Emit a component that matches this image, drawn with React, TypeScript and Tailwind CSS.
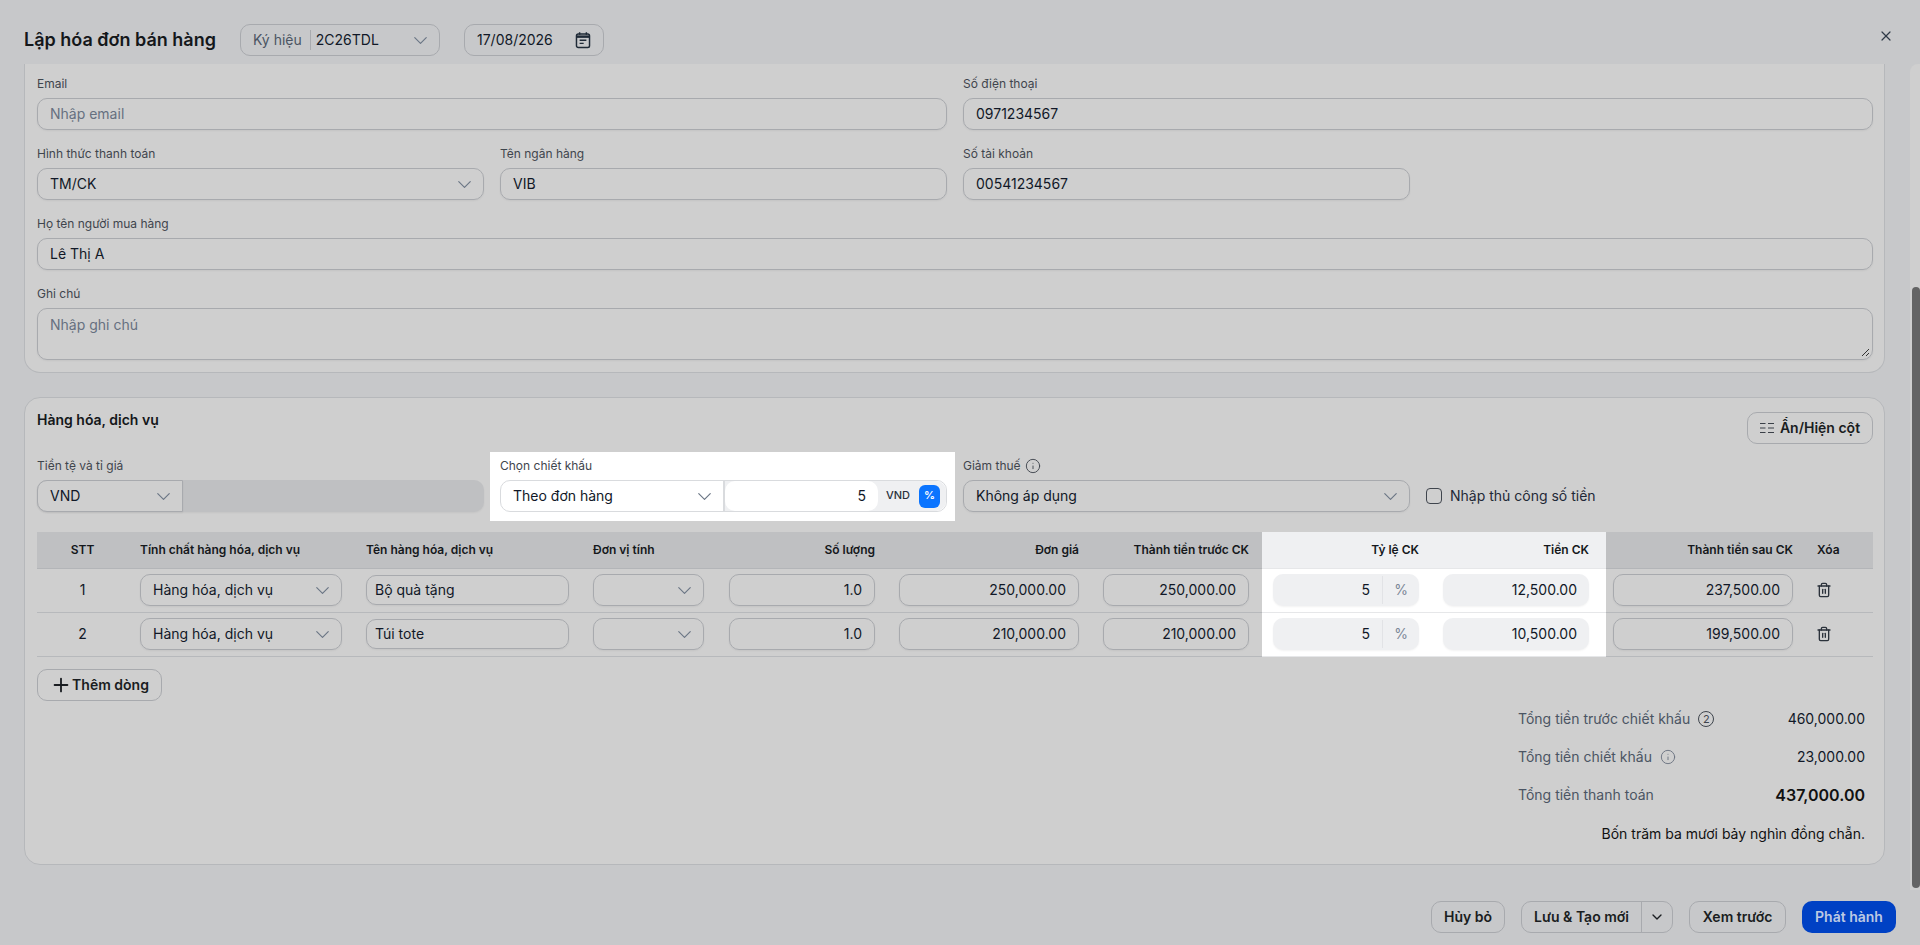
import { ChevronDown, Info, Plus, Trash2, X } from "lucide-react";

const Chev = () => (
  <ChevronDown size={23} strokeWidth={1.2} className="shrink-0 text-[#6b7685]" />
);

const box = "h-8 rounded-[10px] border border-[#a8aaae] shadow-xs flex items-center text-sm";
const ink = " text-[#111827]";
const lab = "h-4 mb-1.5 flex items-center text-xs leading-4 text-[#3f454d]";

const Field = ({ label, children, className = "" }: { label: string; children: React.ReactNode; className?: string }) => (
  <div className={className}>
    <div className={lab}>{label}</div>
    {children}
  </div>
);

const Text = ({ v, ph = false }: { v: string; ph?: boolean }) => (
  <div className={box + " px-3" + (ph ? " text-[#667080]" : ink)}>{v}</div>
);

const Sel = ({ v, className = "" }: { v: string; className?: string }) => (
  <div className={box + ink + " justify-between pl-3 pr-[7px] " + className}>
    <span>{v}</span>
    <Chev />
  </div>
);

const Num = ({ v }: { v: string }) => (
  <div className={box + ink + " justify-end px-3"}>{v}</div>
);

const Btn = ({ children, className = "" }: { children: React.ReactNode; className?: string }) => (
  <div className={"h-8 rounded-[10px] border border-[#a8aaae] flex items-center justify-center text-sm font-semibold text-[#1a1d21] " + className}>
    {children}
  </div>
);

const CalendarIcon = () => (
  <svg width="18" height="18" viewBox="0 0 16 16" fill="none" stroke="#1f2a37" strokeWidth="1.3" className="shrink-0">
    <rect x="2.2" y="2.6" width="11.6" height="12" rx="1.6" />
    <path d="M2.2 5h11.6" strokeWidth="2.2" />
    <path d="M5 1v2.4M11 1v2.4" />
    <path d="M5 8.2h6M5 11h3.6" />
  </svg>
);

const ColumnsIcon = () => (
  <svg width="14" height="12" viewBox="0 0 14 12" fill="none" stroke="#3a4048" strokeWidth="1.1" className="shrink-0">
    <path d="M0 1.5h5.5M0 6h5.5M0 10.5h5.5M8 1.5h6M8 6h6M8 10.5h6" />
  </svg>
);

const gridCols = "grid grid-cols-[91px_226px_227px_135px_171px_204px_171px_169px_175px_199px_68px]";
const cell = "h-11 pb-px flex items-center border-b border-[#b7b9bc]";
const hcell = "h-[37px] flex items-center justify-end border-b border-[#b3b5b8] text-xs font-semibold text-[#15181c] bg-[#bfc0c2]";
const white = "h-11 pb-px flex items-center border-b border-[#e6e7e9] bg-white";

const Row = ({ n, name, price, pct, ck, after }: { n: string; name: string; price: string; pct: string; ck: string; after: string }) => (
  <div className={gridCols}>
    <div className={cell + " justify-center text-sm text-[#111827]"}>{n}</div>
    <div className={cell + " px-3"}><Sel v="Hàng hóa, dịch vụ" className="w-full" /></div>
    <div className={cell + " px-3"}>
      <div className={box + ink + " w-full !h-[30px] px-2"}>{name}</div>
    </div>
    <div className={cell + " px-3"}><Sel v="" className="w-full" /></div>
    <div className={cell + " pl-[13px] pr-3"}><div className="w-full"><Num v="1.0" /></div></div>
    <div className={cell + " px-3"}><div className="w-full"><Num v={price} /></div></div>
    <div className={cell + " pl-3 pr-[13px]"}><div className="w-full"><Num v={price} /></div></div>
    <div className={white + " pl-[11px] pr-3"}>
      <div className="w-full h-8 rounded-[10px] bg-[#eff0f2] shadow-xs flex items-center text-sm text-[#111827]">
        <div className="flex-1 text-right pr-3">{pct}</div>
        <div className="w-[37px] h-7 border-l border-[#e2e3e6] flex items-center justify-center text-[#7b8797]">%</div>
      </div>
    </div>
    <div className={white + " pl-3 pr-[17px]"}>
      <div className="w-full h-8 rounded-[10px] bg-[#eff0f2] shadow-xs flex items-center justify-end px-3 text-sm text-[#111827]">{ck}</div>
    </div>
    <div className={cell + " pl-[7px] pr-3"}><div className="w-full"><Num v={after} /></div></div>
    <div className={cell + " pl-[11px]"}><Trash2 size={16} strokeWidth={2} className="text-[#2b323b]" /></div>
  </div>
);

const Total = ({ label, value, icon, valueClass = "text-sm text-[#111827]" }: { label: string; value: string; icon?: React.ReactNode; valueClass?: string }) => (
  <div className="h-[38px] flex items-center justify-between">
    <div className="flex items-center gap-2 text-sm text-[#4b5563]">
      <span>{label}</span>
      {icon}
    </div>
    <div className={valueClass}>{value}</div>
  </div>
);

export default function App() {
  return (
    <div className="h-[945px] overflow-hidden flex flex-col bg-[#c7c8ca] font-['Inter',sans-serif]">
      <header className="h-16 shrink-0 flex items-center justify-between pl-6 pr-[26px] pt-4">
        <div className="flex items-center">
          <h1 className="text-lg font-semibold text-[#14171a] w-[216px]">Lập hóa đơn bán hàng</h1>
          <div className="w-[200px] h-8 rounded-[10px] border border-[#a8aaae] flex items-center pl-3 pr-[7px] text-sm">
            <span className="text-[#4b5563] pr-2 border-r border-[#a8aaae] leading-5">Ký hiệu</span>
            <span className="pl-[5px] flex-1 text-[#111827]">2C26TDL</span>
            <Chev />
          </div>
          <div className="ml-6 w-[140px] h-8 rounded-[10px] border border-[#a8aaae] flex items-center justify-between pl-3 pr-[11px] text-sm text-[#111827]">
            <span>17/08/2026</span>
            <CalendarIcon />
          </div>
        </div>
        <X size={16} strokeWidth={1.8} className="text-[#2f3a48] -mt-2" />
      </header>

      <div className="flex-1 min-h-0 flex">
        <main className="flex-1 min-w-0 pl-6 pr-[25px]">
          <section className="h-[309px] bg-[#cfcfcf] border border-t-0 border-[#b6b8bb] rounded-b-2xl pt-3 pl-3 pr-[11px] flex flex-col gap-4">
            <div className="grid grid-cols-2 gap-x-4">
              <Field label="Email"><Text v="Nhập email" ph /></Field>
              <Field label="Số điện thoại"><Text v="0971234567" /></Field>
            </div>
            <div className="grid grid-cols-4 gap-x-4">
              <Field label="Hình thức thanh toán"><Sel v="TM/CK" /></Field>
              <Field label="Tên ngân hàng"><Text v="VIB" /></Field>
              <Field label="Số tài khoản"><Text v="00541234567" /></Field>
            </div>
            <Field label="Họ tên người mua hàng"><Text v="Lê Thị A" /></Field>
            <Field label="Ghi chú">
              <div className="relative h-[52px] rounded-[10px] border border-[#a8aaae] shadow-xs px-3 py-1.5 text-sm text-[#667080]">
                Nhập ghi chú
                <svg width="9" height="9" viewBox="0 0 9 9" stroke="#333" strokeWidth="1" className="absolute right-0.5 bottom-0.5">
                  <path d="M1 8l7-7M5 8l3-3" />
                </svg>
              </div>
            </Field>
          </section>

          <section className="mt-6 h-[468px] bg-[#cfcfcf] border border-[#b6b8bb] rounded-2xl pt-3 pl-3 pr-[11px]">
            <div className="flex justify-between items-start">
              <h2 className="text-sm leading-5 font-semibold text-[#14171a]">Hàng hóa, dịch vụ</h2>
              <Btn className="mt-0.5 w-[126px] gap-1.5"><ColumnsIcon />Ẩn/Hiện cột</Btn>
            </div>

            <div className="mt-2 grid grid-cols-4 gap-x-4">
              <div className="pt-1.5">
                <div className={lab}>Tiền tệ và tỉ giá</div>
                <div className="flex h-8 rounded-[10px] bg-[#bfc0c2] shadow-xs">
                  <Sel v="VND" className="w-[146px] rounded-r-none bg-[#cfcfcf]" />
                </div>
              </div>
              <div className="bg-white -ml-2.5 -mr-2 pl-2.5 pr-2 pt-1.5 pb-[9px]">
                <div className={lab}>Chọn chiết khấu</div>
                <div className="h-8 rounded-[10px] border border-[#d9dbde] flex items-center text-sm text-[#111827]">
                  <div className="w-[224px] h-full flex items-center justify-between pl-3 pr-[7px] border-r-2 border-[#d9dbde]">
                    <span>Theo đơn hàng</span>
                    <Chev />
                  </div>
                  <div className="flex-1 h-full flex bg-[#eff0f2] rounded-r-[10px]">
                    <div className="flex-1 h-full bg-white rounded-[10px] flex items-center justify-end pr-3">5</div>
                    <div className="w-[68px] h-full flex items-center justify-between pl-2 pr-1.5 text-[11px] font-medium text-[#2b323b]">
                      <span>VND</span>
                      <span className="w-[21px] h-[23px] rounded-md bg-[#0a74ff] text-white flex items-center justify-center font-semibold">%</span>
                    </div>
                  </div>
                </div>
              </div>
              <div className="pt-1.5">
                <div className={lab + " gap-1"}>Giảm thuế <Info size={16} strokeWidth={1.4} className="text-[#3f454d]" /></div>
                <Sel v="Không áp dụng" />
              </div>
              <div className="pt-1.5">
                <div className="mt-[22px] h-8 flex items-center gap-2 text-sm text-[#1f2937]">
                  <span className="w-4 h-4 rounded-[4px] border border-[#3f454d]" />
                  Nhập thủ công số tiền
                </div>
              </div>
            </div>

            <div className="mt-[11px]">
              <div className={gridCols}>
                <div className={hcell + " !justify-center"}>STT</div>
                <div className={hcell + " !justify-start pl-3"}>Tính chất hàng hóa, dịch vụ</div>
                <div className={hcell + " !justify-start pl-3"}>Tên hàng hóa, dịch vụ</div>
                <div className={hcell + " !justify-start pl-3"}>Đơn vị tính</div>
                <div className={hcell + " pr-3"}>Số lượng</div>
                <div className={hcell + " pr-3"}>Đơn giá</div>
                <div className={hcell + " pr-[13px]"}>Thành tiền trước CK</div>
                <div className="h-[37px] flex items-center justify-end pr-3 bg-[#eff0f2] border-b border-[#e6e7e9] text-xs font-semibold text-[#15181c]">Tỷ lệ CK</div>
                <div className="h-[37px] flex items-center justify-end pr-[17px] bg-[#eff0f2] border-b border-[#e6e7e9] text-xs font-semibold text-[#15181c]">Tiền CK</div>
                <div className={hcell + " pr-3"}>Thành tiền sau CK</div>
                <div className={hcell + " !justify-start pl-3"}>Xóa</div>
              </div>
              <Row n="1" name="Bộ quà tặng" price="250,000.00" pct="5" ck="12,500.00" after="237,500.00" />
              <Row n="2" name="Túi tote" price="210,000.00" pct="5" ck="10,500.00" after="199,500.00" />
            </div>

            <Btn className="mt-3 w-[125px]"><Plus size={22} strokeWidth={2} />Thêm dòng</Btn>

            <div className="ml-auto mr-2 -mt-px w-[347px]">
              <Total
                label="Tổng tiền trước chiết khấu"
                value="460,000.00"
                icon={<span className="w-4 h-4 rounded-full border border-[#3f454d] flex items-center justify-center text-[11px] leading-none text-[#3f454d]">2</span>}
              />
              <Total label="Tổng tiền chiết khấu" value="23,000.00" icon={<Info size={16} strokeWidth={1.4} className="text-[#6b7280]" />} />
              <Total label="Tổng tiền thanh toán" value="437,000.00" valueClass="text-base font-semibold text-[#111]" />
              <div className="h-10 flex items-center justify-end text-sm text-[#111]">Bốn trăm ba mươi bảy nghìn đồng chẵn.</div>
            </div>
          </section>
        </main>
        <div className="w-2.5 shrink-0 bg-[#cfcfcf] rounded-tl-lg flex justify-end pt-[223px] pb-0.5">
          <div className="w-2 h-full rounded-full bg-[#646464]" />
        </div>
      </div>

      <footer className="h-[55px] shrink-0 flex items-start justify-end gap-4 pr-6 pt-[11px]">
        <Btn className="w-[74px]">Hủy bỏ</Btn>
        <Btn className="w-[152px]">
          <span className="flex-1 text-center">Lưu &amp; Tạo mới</span>
          <span className="w-[31px] h-full border-l border-[#a8aaae] flex items-center justify-center">
            <ChevronDown size={16} strokeWidth={2} />
          </span>
        </Btn>
        <Btn className="w-[97px]">Xem trước</Btn>
        <div className="w-[94px] h-8 rounded-[10px] bg-[#0041c4] flex items-center justify-center text-sm font-semibold text-[#bcc9e3]">Phát hành</div>
      </footer>
    </div>
  );
}
